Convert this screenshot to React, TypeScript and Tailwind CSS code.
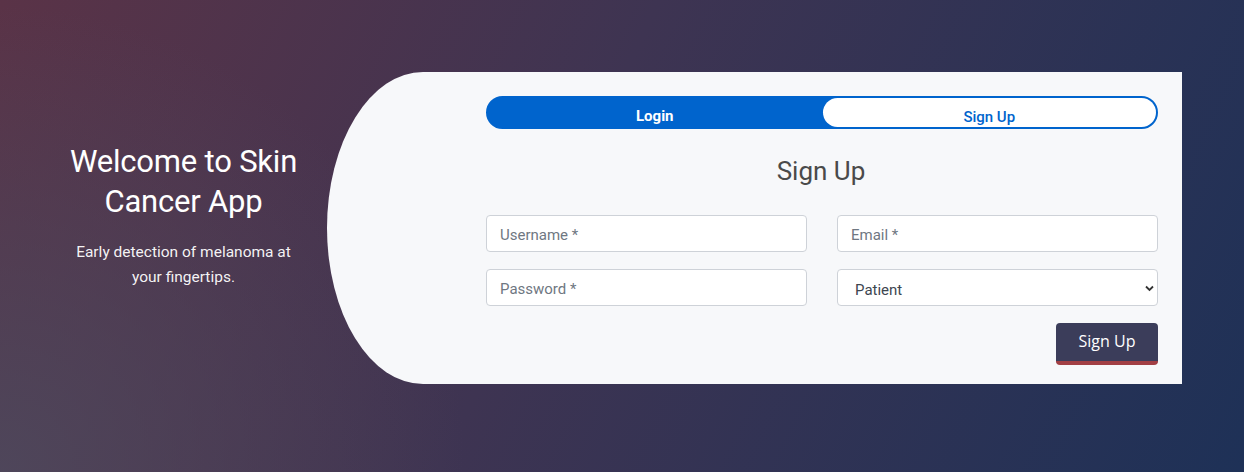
export default function App() {
    return (
        <main className="w-[1244px] h-[472px] overflow-hidden font-['Roboto',sans-serif] bg-[radial-gradient(circle_at_0%_100%,rgba(78,72,92,0.9)_0%,rgba(78,72,92,0)_35%),linear-gradient(115deg,#5a3347_0%,#3e3452_45%,#1e3157_100%)] flex items-start">
            {/* welcome column */}
            <section className="w-[287px] ml-[40px] mt-[142px] flex flex-col items-center text-center text-white">
                <h1 className="text-[31px] leading-[40px] font-normal tracking-[-0.2px]">Welcome to Skin<br />Cancer App</h1>
                <p className="mt-[18px] text-[15.5px] leading-[25px] text-white/95">Early detection of melanoma at<br />your fingertips.</p>
            </section>

            {/* card */}
            <section className="mt-[72px] w-[855px] h-[312px] bg-[#f7f8fa] rounded-tl-[96px_156px] rounded-bl-[96px_156px] pl-[159px] pr-[24px] pt-[24px]">
                <div className="flex h-[33px] w-[672px] rounded-full bg-[#0064cd] border-2 border-[#0064cd]">
                    <button className="flex-1 flex items-center justify-center leading-[15px] text-white text-[15px] font-bold pt-[8px]">Login</button>
                    <button className="flex-1 flex items-center justify-center leading-[15px] bg-white rounded-full text-[#0064cd] text-[15px] font-medium pt-[10px] ml-[1px]">Sign Up</button>
                </div>

                <h2 className="mt-[24px] text-center text-[26px] leading-[36px] text-[#4a4a4a] pr-[2px]">Sign Up</h2>

                <div className="mt-[26px] grid grid-cols-2 gap-x-[30px] gap-y-[17px] w-[672px]">
                    <input placeholder="Username *" className="h-[37px] bg-white border border-[#ced2d8] rounded-[4px] px-[13px] pt-[3px] text-[15px] placeholder:text-[#6f7782] outline-none" />
                    <input placeholder="Email *" className="h-[37px] bg-white border border-[#ced2d8] rounded-[4px] px-[13px] pt-[3px] text-[15px] placeholder:text-[#6f7782] outline-none" />
                    <input placeholder="Password *" className="h-[37px] bg-white border border-[#ced2d8] rounded-[4px] px-[13px] pt-[3px] text-[15px] placeholder:text-[#6f7782] outline-none" />
                    <div className="relative h-[37px] bg-white border border-[#ced2d8] rounded-[4px] flex items-center px-[17px] text-[15px] text-[#3d4650]">
                        <span className="pt-[5px]">Patient</span>
                        <svg className="absolute right-[3px] top-[15px]" width="9" height="7" viewBox="0 0 9 7">
                            <path d="M1 1.5 L4.5 5 L8 1.5" stroke="#333" strokeWidth="1.8" fill="none" />
                        </svg>
                    </div>
                </div>

                <div className="mt-[17px] flex justify-end w-[672px]">
                    <button className="w-[102px] h-[42px] rounded-[4px] bg-[#3b3d5a] border-b-[4px] border-[#a23f44] text-white text-[16px] font-['Open_Sans',sans-serif] pb-[2px]">Sign Up</button>
                </div>
            </section>
        </main>
    );
}
